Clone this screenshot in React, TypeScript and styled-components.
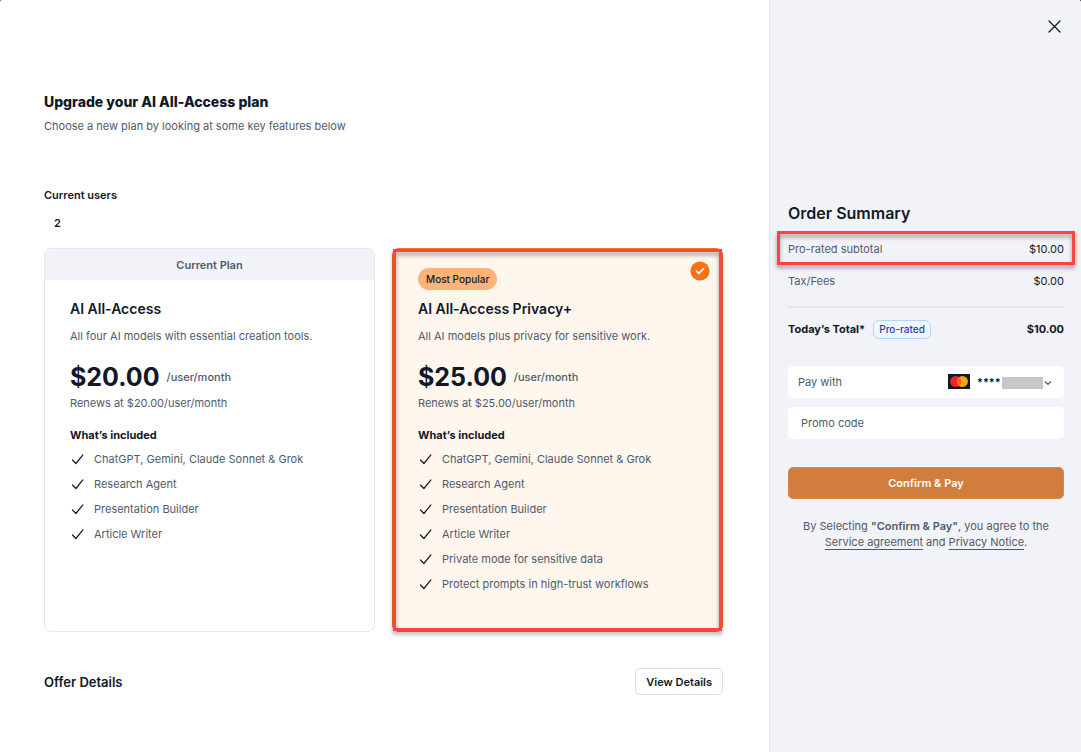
import React from "react";
import styled, { createGlobalStyle } from "styled-components";

const ink = "#111827";
const slate = "#505a6b";
const panel = "#f2f3f8";
const red = "#ff4242";

const GlobalStyle = createGlobalStyle`
  *, *::before, *::after { box-sizing: border-box; }
  body {
    margin: 0;
    background: #374151;
    color: ${ink};
    font-family: Inter, "Liberation Sans", sans-serif;
    font-size: 11px;
    line-height: 16px;
  }
  h1, h2, h3, h4, p, ul, dl, dd { margin: 0; padding: 0; }
  button, input, select { font: inherit; color: inherit; }
`;

const Page = styled.div`
  display: grid;
  grid-template-columns: minmax(0, 1fr) 312px;
  min-height: 100vh;
  overflow: hidden;
  border-radius: 2px 3px 0 0;
  background: #ffffff;
`;

const Main = styled.main`
  padding: 92px 46px 40px 44px;
`;

const Title = styled.h1`
  font-size: 14px;
  line-height: 20px;
  font-weight: 800;
`;

const Subtitle = styled.p`
  margin-top: 6px;
  color: ${slate};
`;

const Users = styled.section`
  margin-top: 53px;
`;

const UsersLabel = styled.h2`
  font-size: 11px;
  line-height: 16px;
  font-weight: 600;
`;

const UsersCount = styled.p`
  margin-top: 12px;
  padding-left: 10px;
  font-weight: 600;
`;

const Plans = styled.section`
  display: grid;
  grid-template-columns: 1fr 1fr;
  gap: 17px;
  margin-top: 17px;
`;

const PlanCard = styled.article<{ $selected?: boolean }>`
  position: relative;
  display: flex;
  flex-direction: column;
  min-height: 384px;
  border: ${(p) => (p.$selected ? "2px solid #f4761a" : "1px solid #e5e7eb")};
  border-radius: 7px;
  background: ${(p) => (p.$selected ? "#fff6ed" : "#ffffff")};
`;

const PlanBanner = styled.p`
  height: 31px;
  border-radius: 6px 6px 0 0;
  background: ${panel};
  color: ${slate};
  font-weight: 600;
  line-height: 32px;
  text-align: center;
`;

const PopularRow = styled.div`
  display: flex;
  height: 30px;
  padding: 18px 24px 0;
`;

const PopularBadge = styled.span`
  flex: none;
  height: 22px;
  padding: 0 8px;
  border-radius: 11px;
  background: #ffb37a;
  font-size: 10px;
  line-height: 22px;
  font-weight: 500;
`;

const SelectedMark = styled.svg`
  position: absolute;
  top: 11px;
  right: 11px;
  width: 20px;
  height: 20px;
`;

const PlanBody = styled.div<{ $inset: number }>`
  padding: 19px ${(p) => p.$inset}px 32px;
`;

const PlanName = styled.h3`
  font-size: 14px;
  line-height: 20px;
  font-weight: 600;
`;

const PlanText = styled.p`
  margin-top: 9px;
  color: ${slate};
`;

const PriceRow = styled.p`
  display: flex;
  align-items: center;
  gap: 7px;
  margin-top: 17px;
  line-height: 32px;
`;

const Price = styled.strong`
  font-size: 25px;
  font-weight: 700;
`;

const Period = styled.span`
  color: ${slate};
  font-weight: 500;
`;

const Renewal = styled.p`
  margin-top: 2px;
  color: ${slate};
`;

const IncludedTitle = styled.h4`
  margin-top: 16px;
  font-size: 11px;
  line-height: 16px;
  font-weight: 700;
`;

const FeatureList = styled.ul`
  display: grid;
  gap: 9px;
  margin-top: 8px;
  list-style: none;
`;

const Feature = styled.li`
  display: flex;
  align-items: center;
  gap: 8px;
  color: ${slate};

  svg { flex: none; width: 16px; height: 16px; }
`;

const Highlight = styled.span<{ $inset: string }>`
  position: absolute;
  inset: ${(p) => p.$inset};
  border: 3px solid ${red};
  filter: drop-shadow(0 3px 2px rgba(0, 0, 0, 0.4));
  pointer-events: none;
`;

const Offer = styled.section`
  display: flex;
  align-items: center;
  justify-content: space-between;
  margin-top: 36px;
`;

const OfferTitle = styled.h2`
  font-size: 13px;
  line-height: 16px;
  font-weight: 600;
`;

const OutlineButton = styled.button`
  height: 27px;
  padding: 0 10px;
  border: 1px solid #dcdee6;
  border-radius: 5px;
  background: #ffffff;
  font-weight: 600;
  cursor: pointer;
`;

const Sidebar = styled.aside`
  position: relative;
  display: flex;
  flex-direction: column;
  justify-content: center;
  padding: 0 17px 0 18px;
  border-left: 1px solid #e5e7eb;
  background: ${panel};
`;

const CloseButton = styled.button`
  position: absolute;
  top: 18px;
  right: 18px;
  width: 17px;
  height: 17px;
  padding: 0;
  border: 0;
  background: none;
  cursor: pointer;

  svg { display: block; width: 17px; height: 17px; }
`;

const SummaryTitle = styled.h2`
  font-size: 16px;
  line-height: 20px;
  font-weight: 600;
`;

const Lines = styled.dl`
  display: grid;
  gap: 16px;
  margin-top: 18px;
  padding-bottom: 17px;
  border-bottom: 2px solid #e5e7eb;
`;

const Line = styled.div`
  position: relative;
  display: flex;
  justify-content: space-between;

  dt { color: ${slate}; }
`;

const Total = styled.div`
  display: flex;
  align-items: center;
  margin-top: 12px;
  font-weight: 700;

  strong { margin-left: auto; font-weight: 700; }
`;

const ProratedTag = styled.span`
  height: 19px;
  margin-left: 8px;
  padding: 0 5px;
  border: 1px solid #b3d4fb;
  border-radius: 6px;
  background: #eff6ff;
  color: #1e40af;
  font-size: 10px;
  line-height: 17px;
  font-weight: 500;
`;

const Fields = styled.div`
  display: grid;
  gap: 9px;
  margin-top: 27px;
`;

const PayField = styled.div`
  display: flex;
  align-items: center;
  height: 32px;
  padding: 0 11px 0 10px;
  border-radius: 5px;
  background: #ffffff;
  color: ${slate};
`;

const CardLogo = styled.svg`
  width: 22px;
  height: 15px;
  margin-left: auto;
`;

const SelectBox = styled.div`
  position: relative;
  width: 77px;
  margin-left: 6px;
`;

const CardSelect = styled.select`
  display: block;
  width: 100%;
  height: 20px;
  padding: 0 0 0 1px;
  border: 0;
  background: transparent;
  color: ${ink};
  font-weight: 600;
  appearance: none;
  cursor: pointer;
`;

const SelectCover = styled.span`
  position: absolute;
  top: 5px;
  right: 0;
  display: flex;
  align-items: center;
  pointer-events: none;

  svg { width: 10px; height: 10px; }
`;

const HiddenDigits = styled.span`
  width: 41px;
  height: 12px;
  background: #c6c6cb;
`;

const PromoInput = styled.input`
  width: 100%;
  height: 32px;
  padding: 0 13px;
  border: 0;
  border-radius: 5px;
  background: #ffffff;

  &::placeholder { color: ${slate}; opacity: 1; }
`;

const PayButton = styled.button`
  height: 32px;
  margin-top: 28px;
  border: 1px solid #d58850;
  border-radius: 5px;
  background: #d17d3d;
  color: #ffffff;
  font-weight: 600;
  cursor: pointer;
`;

const Terms = styled.p`
  margin-top: 19px;
  color: ${slate};
  text-align: center;

  strong { font-weight: 600; }
  a { color: inherit; text-underline-offset: 3px; }
`;

const Check = () => (
  <svg viewBox="0 0 16 16" fill="none" stroke={ink} strokeWidth="1.2" strokeLinecap="round" strokeLinejoin="round" aria-hidden="true">
    <path d="M2.5 9 5.9 12.5 12.9 3.9" />
  </svg>
);

const base = ["ChatGPT, Gemini, Claude Sonnet & Grok", "Research Agent", "Presentation Builder", "Article Writer"];

interface PlanProps {
  name: string;
  text: string;
  price: string;
  features: string[];
  selected?: boolean;
}

const Plan = ({ name, text, price, features, selected }: PlanProps) => (
  <PlanCard $selected={selected}>
    {selected ? (
      <PopularRow>
        <PopularBadge>Most Popular</PopularBadge>
        <SelectedMark viewBox="0 0 20 20" role="img" aria-label="Selected">
          <circle cx="10" cy="10" r="9.6" fill="#f97316" />
          <path d="M6.6 10.2 8.8 12.3 13.4 7.9" fill="none" stroke="#fff" strokeWidth="1.6" strokeLinecap="round" strokeLinejoin="round" />
        </SelectedMark>
      </PopularRow>
    ) : (
      <PlanBanner>Current Plan</PlanBanner>
    )}
    <PlanBody $inset={selected ? 24 : 25}>
      <PlanName>{name}</PlanName>
      <PlanText>{text}</PlanText>
      <PriceRow>
        <Price>{price}</Price>
        <Period>/user/month</Period>
      </PriceRow>
      <Renewal>Renews at {price}/user/month</Renewal>
      <IncludedTitle>What’s included</IncludedTitle>
      <FeatureList>
        {features.map((f) => (
          <Feature key={f}>
            <Check />
            {f}
          </Feature>
        ))}
      </FeatureList>
    </PlanBody>
    {selected && <Highlight $inset="-1px" />}
  </PlanCard>
);

export default function App() {
  return (
    <>
      <GlobalStyle />
      <Page>
        <Main>
          <Title>Upgrade your AI All-Access plan</Title>
          <Subtitle>Choose a new plan by looking at some key features below</Subtitle>
          <Users>
            <UsersLabel>Current users</UsersLabel>
            <UsersCount>2</UsersCount>
          </Users>
          <Plans>
            <Plan name="AI All-Access" text="All four AI models with essential creation tools." price="$20.00" features={base} />
            <Plan
              selected
              name="AI All-Access Privacy+"
              text="All AI models plus privacy for sensitive work."
              price="$25.00"
              features={[...base, "Private mode for sensitive data", "Protect prompts in high-trust workflows"]}
            />
          </Plans>
          <Offer>
            <OfferTitle>Offer Details</OfferTitle>
            <OutlineButton type="button">View Details</OutlineButton>
          </Offer>
        </Main>
        <Sidebar>
          <CloseButton type="button" aria-label="Close">
            <svg viewBox="0 0 17 17" stroke={ink} strokeWidth="1.3" strokeLinecap="round" aria-hidden="true">
              <path d="M3 3 14 14M14 3 3 14" />
            </svg>
          </CloseButton>
          <SummaryTitle>Order Summary</SummaryTitle>
          <Lines>
            <Line>
              <dt>Pro-rated subtotal</dt>
              <dd>$10.00</dd>
              <Highlight $inset="-10px -11px -8px -11px" />
            </Line>
            <Line>
              <dt>Tax/Fees</dt>
              <dd>$0.00</dd>
            </Line>
          </Lines>
          <Total>
            Today’s Total*
            <ProratedTag>Pro-rated</ProratedTag>
            <strong>$10.00</strong>
          </Total>
          <Fields>
            <PayField>
              <label htmlFor="card">Pay with</label>
              <CardLogo viewBox="0 0 22 15" role="img" aria-label="Mastercard">
                <rect width="22" height="15" fill="#111827" />
                <circle cx="7.7" cy="7.5" r="5.6" fill="#eb2226" />
                <circle cx="14.3" cy="7.5" r="5.6" fill="#f9a01b" />
                <path d="M11 3a5.6 5.6 0 0 1 0 9a5.6 5.6 0 0 1 0-9Z" fill="#f26122" />
              </CardLogo>
              <SelectBox>
                <CardSelect id="card">
                  <option>****</option>
                </CardSelect>
                <SelectCover>
                  <HiddenDigits />
                  <svg viewBox="0 0 10 10" fill="none" stroke={slate} strokeWidth="1.2" strokeLinecap="round" strokeLinejoin="round" aria-hidden="true">
                    <path d="M2.2 3.8 5 6.4 7.8 3.8" />
                  </svg>
                </SelectCover>
              </SelectBox>
            </PayField>
            <PromoInput type="text" placeholder="Promo code" aria-label="Promo code" />
          </Fields>
          <PayButton type="button">Confirm &amp; Pay</PayButton>
          <Terms>
            By Selecting <strong>"Confirm &amp; Pay"</strong>, you agree to the
            <br />
            <a href="#service">Service agreement</a> and <a href="#privacy">Privacy Notice</a>.
          </Terms>
        </Sidebar>
      </Page>
    </>
  );
}
